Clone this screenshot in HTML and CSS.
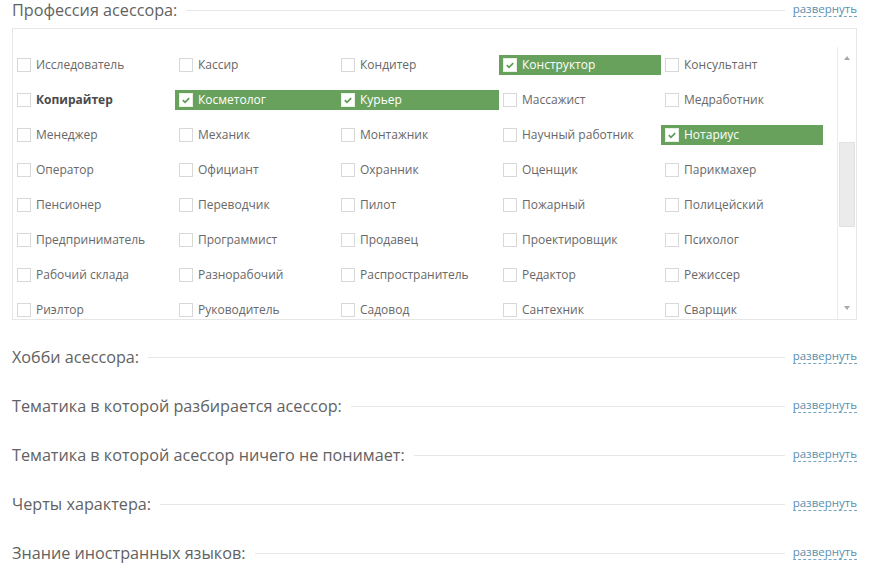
FILE: index.html
```html
<!DOCTYPE html>
<html lang="ru">
<head>
<meta charset="utf-8">
<link rel="stylesheet" href="styles.css">
</head>
<body>
<div class="page">
  <section class="group open">
    <div class="group-head">
      <span class="group-title">Профессия асессора:</span>
      <span class="rule"></span>
      <a class="toggle" href="#">развернуть</a>
    </div>
    <div class="panel">
      <div class="viewport">
        <div class="list">
          <div class="item"><span class="box"></span>Исследователь</div>
          <div class="item"><span class="box"></span>Кассир</div>
          <div class="item"><span class="box"></span>Кондитер</div>
          <div class="item checked"><span class="box"><svg viewBox="0 0 13 13"><path d="M3 6.6 L5.4 9 L10 4.4" /></svg></span>Конструктор</div>
          <div class="item"><span class="box"></span>Консультант</div>

          <div class="item strong"><span class="box"></span>Копирайтер</div>
          <div class="item checked"><span class="box"><svg viewBox="0 0 13 13"><path d="M3 6.6 L5.4 9 L10 4.4" /></svg></span>Косметолог</div>
          <div class="item checked"><span class="box"><svg viewBox="0 0 13 13"><path d="M3 6.6 L5.4 9 L10 4.4" /></svg></span>Курьер</div>
          <div class="item"><span class="box"></span>Массажист</div>
          <div class="item"><span class="box"></span>Медработник</div>

          <div class="item"><span class="box"></span>Менеджер</div>
          <div class="item"><span class="box"></span>Механик</div>
          <div class="item"><span class="box"></span>Монтажник</div>
          <div class="item"><span class="box"></span>Научный работник</div>
          <div class="item checked"><span class="box"><svg viewBox="0 0 13 13"><path d="M3 6.6 L5.4 9 L10 4.4" /></svg></span>Нотариус</div>

          <div class="item"><span class="box"></span>Оператор</div>
          <div class="item"><span class="box"></span>Официант</div>
          <div class="item"><span class="box"></span>Охранник</div>
          <div class="item"><span class="box"></span>Оценщик</div>
          <div class="item"><span class="box"></span>Парикмахер</div>

          <div class="item"><span class="box"></span>Пенсионер</div>
          <div class="item"><span class="box"></span>Переводчик</div>
          <div class="item"><span class="box"></span>Пилот</div>
          <div class="item"><span class="box"></span>Пожарный</div>
          <div class="item"><span class="box"></span>Полицейский</div>

          <div class="item"><span class="box"></span>Предприниматель</div>
          <div class="item"><span class="box"></span>Программист</div>
          <div class="item"><span class="box"></span>Продавец</div>
          <div class="item"><span class="box"></span>Проектировщик</div>
          <div class="item"><span class="box"></span>Психолог</div>

          <div class="item"><span class="box"></span>Рабочий склада</div>
          <div class="item"><span class="box"></span>Разнорабочий</div>
          <div class="item"><span class="box"></span>Распространитель</div>
          <div class="item"><span class="box"></span>Редактор</div>
          <div class="item"><span class="box"></span>Режиссер</div>

          <div class="item"><span class="box"></span>Риэлтор</div>
          <div class="item"><span class="box"></span>Руководитель</div>
          <div class="item"><span class="box"></span>Садовод</div>
          <div class="item"><span class="box"></span>Сантехник</div>
          <div class="item"><span class="box"></span>Сварщик</div>
        </div>
      </div>
      <div class="scrollbar">
        <span class="arrow up"></span>
        <div class="track"><span class="thumb"></span></div>
        <span class="arrow down"></span>
      </div>
    </div>
  </section>

  <section class="group">
    <div class="group-head">
      <span class="group-title">Хобби асессора:</span>
      <span class="rule"></span>
      <a class="toggle" href="#">развернуть</a>
    </div>
  </section>
  <section class="group">
    <div class="group-head">
      <span class="group-title">Тематика в которой разбирается асессор:</span>
      <span class="rule"></span>
      <a class="toggle" href="#">развернуть</a>
    </div>
  </section>
  <section class="group">
    <div class="group-head">
      <span class="group-title">Тематика в которой асессор ничего не понимает:</span>
      <span class="rule"></span>
      <a class="toggle" href="#">развернуть</a>
    </div>
  </section>
  <section class="group">
    <div class="group-head">
      <span class="group-title">Черты характера:</span>
      <span class="rule"></span>
      <a class="toggle" href="#">развернуть</a>
    </div>
  </section>
  <section class="group">
    <div class="group-head">
      <span class="group-title">Знание иностранных языков:</span>
      <span class="rule"></span>
      <a class="toggle" href="#">развернуть</a>
    </div>
  </section>
</div>
</body>
</html>
```
FILE: styles.css
```css
* { box-sizing: border-box; }
html, body { margin: 0; padding: 0; background: #fff; }
body {
  font-family: "Open Sans", "Noto Sans", sans-serif;
  color: #666;
  width: 877px;
  height: 583px;
  overflow: hidden;
}
.page {
  padding: 0 20px 0 12px;
  display: flex;
  flex-direction: column;
}
.group { margin-bottom: 29px; }
.group.open { margin-bottom: 27px; }
.group-head {
  display: flex;
  align-items: center;
  height: 20px;
}
.group-title {
  font-size: 16.2px;
  line-height: 20px;
  color: #626262;
  white-space: nowrap;
}
.rule {
  flex: 1;
  height: 1px;
  background: #e6e6e6;
  margin: 0 8px 0 9px;
}
.toggle {
  font-size: 11.5px;
  line-height: 15px;
  color: #5a8fae;
  text-decoration: none;
  border-bottom: 1px dashed #7aa6c2;
  margin-top: -3px;
}
.panel {
  margin-top: 8px;
  border: 1px solid #e6e6e6;
  padding-top: 18px;
  display: flex;
  height: 292px;
}
.viewport {
  width: 825px;
  overflow: hidden;
}
.list {
  display: grid;
  grid-template-columns: repeat(5, 162px);
  grid-auto-rows: 35px;
  align-items: center;
}
.item {
  height: 20px;
  display: flex;
  align-items: center;
  padding-left: 4px;
  font-size: 12px;
  color: #686868;
  white-space: nowrap;
}
.box {
  width: 14px;
  height: 14px;
  border: 1px solid #d8d8d8;
  background: #fff;
  margin-right: 5px;
  flex: none;
  display: flex;
}
.box svg { width: 12px; height: 12px; }
.box path { fill: none; stroke: #5f9a54; stroke-width: 1.8; }
.item.checked {
  background: #68a15c;
  color: #fff;
}
.item.checked .box { border-color: #e8f0e4; }
.item.strong { font-weight: 700; color: #4a4a4a; }
.scrollbar {
  width: 19px;
  border-left: 1px solid #ececec;
  display: flex;
  flex-direction: column;
  align-items: center;
}
.arrow {
  width: 0; height: 0;
  border-left: 3px solid transparent;
  border-right: 3px solid transparent;
  flex: none;
}
.arrow.up { border-bottom: 4px solid #a8a8a8; margin-top: 9px; }
.arrow.down { border-top: 4px solid #a8a8a8; margin-bottom: 9px; }
.track {
  flex: 1;
  width: 100%;
  padding-top: 82px;
}
.thumb {
  display: block;
  width: 16px;
  height: 85px;
  margin-left: 1px;
  background: #ebebeb;
  border: 1px solid #e2e2e2;
}
```
